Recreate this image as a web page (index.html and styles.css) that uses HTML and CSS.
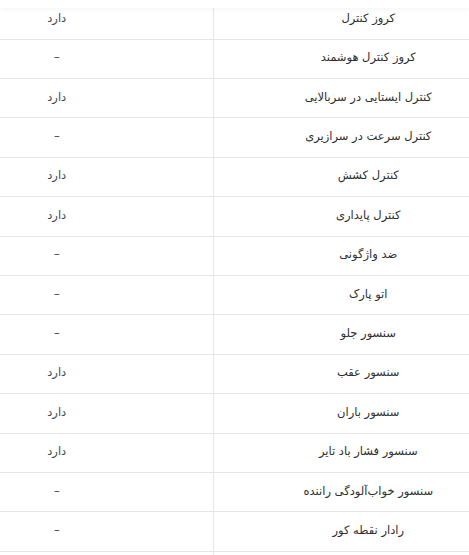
FILE: index.html
```html
<!DOCTYPE html>
<html lang="fa" dir="rtl">
<head>
<meta charset="utf-8">
<title>مشخصات</title>
<link rel="stylesheet" href="styles.css">
</head>
<body>
<div class="frame">
  <div class="topbar"></div>
  <div class="viewport">
    <table class="specs">
      <colgroup><col class="col-name"><col class="col-value"></colgroup>
      <tbody>
        <tr><td class="name">کروز کنترل</td><td class="value">دارد</td></tr>
        <tr><td class="name">کروز کنترل هوشمند</td><td class="value">–</td></tr>
        <tr><td class="name">کنترل ایستایی در سربالایی</td><td class="value">دارد</td></tr>
        <tr><td class="name">کنترل سرعت در سرازیری</td><td class="value">–</td></tr>
        <tr><td class="name">کنترل کشش</td><td class="value">دارد</td></tr>
        <tr><td class="name">کنترل پایداری</td><td class="value">دارد</td></tr>
        <tr><td class="name">ضد واژگونی</td><td class="value">–</td></tr>
        <tr><td class="name">اتو پارک</td><td class="value">–</td></tr>
        <tr><td class="name">سنسور جلو</td><td class="value">–</td></tr>
        <tr><td class="name">سنسور عقب</td><td class="value">دارد</td></tr>
        <tr><td class="name">سنسور باران</td><td class="value">دارد</td></tr>
        <tr><td class="name">سنسور فشار باد تایر</td><td class="value">دارد</td></tr>
        <tr><td class="name">سنسور خواب‌آلودگی راننده</td><td class="value">–</td></tr>
        <tr><td class="name">رادار نقطه کور</td><td class="value">–</td></tr>
        <tr><td class="name"></td><td class="value"></td></tr>
      </tbody>
    </table>
  </div>
</div>
</body>
</html>
```
FILE: styles.css
```css
html, body {
  margin: 0;
  padding: 0;
  background: #ffffff;
}
body {
  font-family: "DejaVu Sans", "Noto Sans", sans-serif;
  font-size: 11.5px;
}
.frame {
  height: 555px;
  overflow: hidden;
}
.topbar {
  height: 8px;
  background: #ffffff;
  position: relative;
  z-index: 1;
  box-shadow: 0 1px 5px rgba(0, 0, 0, 0.05);
}
.viewport {
  overflow: hidden;
  height: 547px;
}
.specs {
  width: 622px;
  margin-top: -8.4px;
  margin-right: -54px;
  border-collapse: collapse;
  table-layout: fixed;
}
.col-name { width: 310px; }
.col-value { width: 312px; }
.specs td {
  height: 39.42px;
  padding: 0 0 3px;
  box-sizing: border-box;
  text-align: center;
  vertical-align: middle;
  border-bottom: 1px solid #e6e6e6;
}
.specs td.name {
  color: #2e2e2e;
  border-left: 1px solid #e6e6e6;
}
.specs td.value {
  color: #4a4a4a;
}
```
